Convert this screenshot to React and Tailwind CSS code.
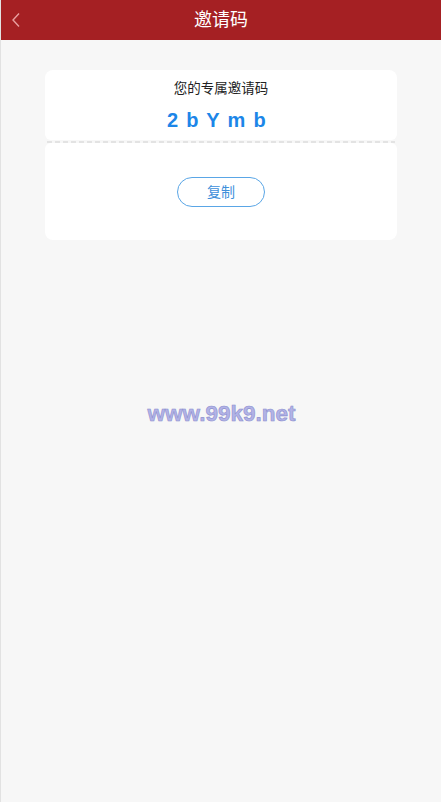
import React from "react";

export default function App() {
  return (
    <div
      className="min-h-[802px] w-full bg-[#f7f7f7] border-l border-[#e2e2e2] flex flex-col"
      style={{ fontFamily: '"Liberation Sans", Arial, "Noto Sans CJK SC", sans-serif' }}
    >
      <header className="h-10 bg-[#a52023] flex items-center relative">
        <button className="absolute left-[7px] top-[12px] w-4 h-4 flex items-center justify-center">
          <svg width="10" height="16" viewBox="0 0 10 16" fill="none">
            <path d="M8 1.5 L2 8 L8 14.5" stroke="#e9a0a0" strokeWidth="1.4" />
          </svg>
        </button>
        <h1 className="flex-1 text-center text-white text-[18px] leading-10">邀请码</h1>
      </header>

      <main className="px-[44px] pt-[30px]">
        <div className="flex flex-col">
          <div className="bg-white rounded-t-[8px] rounded-b-[6px] h-[70px] flex flex-col items-center">
            <p className="text-[13.5px] text-[#222] mt-[11px] leading-4">您的专属邀请码</p>
            <p className="text-[20px] font-bold text-[#1c86e8] mt-[11px] leading-6 tracking-[1.3px] pr-[8px]">2 b Y m b</p>
          </div>
          <div className="h-[3px] flex items-center px-[2px]">
            <div className="h-[2px] w-full bg-[repeating-linear-gradient(90deg,#e3e3e3_0_5px,transparent_5px_8px)]" />
          </div>
          <div className="bg-white rounded-t-[6px] rounded-b-[8px] h-[97px] flex items-center justify-center">
            <button className="w-[88px] h-[30px] rounded-full border border-[#5aa6e6] text-[#3d8fdb] text-[14px] mt-[1px]">
              复制
            </button>
          </div>
        </div>
      </main>

      <div className="flex justify-center mt-[160px] pl-[1px]">
        <span
          className="text-[22.5px] font-bold text-[#b2b3e6] leading-7"
          style={{ WebkitTextStroke: "0.6px #8c8ecf" }}
        >
          www.99k9.net
        </span>
      </div>
    </div>
  );
}
